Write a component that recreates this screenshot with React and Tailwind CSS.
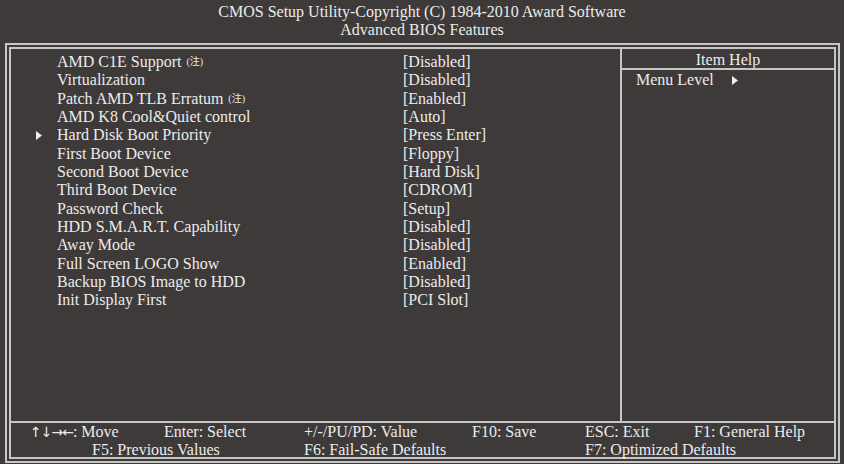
import React from 'react';

const ROWS = [
  { label: 'AMD C1E Support', note: true, value: '[Disabled]' },
  { label: 'Virtualization', value: '[Disabled]' },
  { label: 'Patch AMD TLB Erratum', note: true, value: '[Enabled]' },
  { label: 'AMD K8 Cool&Quiet control', value: '[Auto]' },
  { label: 'Hard Disk Boot Priority', sub: true, value: '[Press Enter]' },
  { label: 'First Boot Device', value: '[Floppy]' },
  { label: 'Second Boot Device', value: '[Hard Disk]' },
  { label: 'Third Boot Device', value: '[CDROM]' },
  { label: 'Password Check', value: '[Setup]' },
  { label: 'HDD S.M.A.R.T. Capability', value: '[Disabled]' },
  { label: 'Away Mode', value: '[Disabled]' },
  { label: 'Full Screen LOGO Show', value: '[Enabled]' },
  { label: 'Backup BIOS Image to HDD', value: '[Disabled]' },
  { label: 'Init Display First', value: '[PCI Slot]' },
];

function Arrow({ className }) {
  return (
    <svg width="6" height="9" viewBox="0 0 6 9" className={className}>
      <path d="M0 0 L6 4.5 L0 9 Z" fill="#ececec" />
    </svg>
  );
}

function Note() {
  return (
    <sup className="ml-[5px] text-[10px] leading-none font-['Liberation_Serif','Noto_Sans_CJK_SC',serif] relative -top-[2px]">
      (注)
    </sup>
  );
}

export default function App() {
  return (
    <div className="w-[844px] h-[464px] overflow-hidden bg-[#3d3a39] text-[#ececec] font-['Liberation_Serif','Noto_Sans_CJK_SC',serif] text-[16px]">
      {/* header */}
      <div className="h-[43px] pt-[3px] flex flex-col items-center leading-[18px]">
        <div>CMOS Setup Utility-Copyright (C) 1984-2010 Award Software</div>
        <div>Advanced BIOS Features</div>
      </div>

      {/* outer frame */}
      <div className="ml-[5px] mr-[4px] h-[420px] border-2 border-[#c6c6c6] p-[2px]">
        <div className="h-full border-2 border-[#c6c6c6] flex flex-col">
          <div className="flex flex-1 min-h-0">
            {/* settings list */}
            <div className="w-[609px] pt-[4px] leading-[18.35px]">
              {ROWS.map((r) => (
                <div key={r.label} className="flex items-center h-[18.35px]">
                  <div className="w-[46px] flex items-center pl-[25px]">
                    {r.sub && <Arrow />}
                  </div>
                  <div className="w-[346px] whitespace-nowrap">
                    {r.label}
                    {r.note && <Note />}
                  </div>
                  <div className="whitespace-nowrap">{r.value}</div>
                </div>
              ))}
            </div>

            <div className="w-[2px] bg-[#c6c6c6]" />

            {/* item help */}
            <div className="flex-1 flex flex-col">
              <div className="h-[19px] pt-[3px] leading-[16px] text-center">Item Help</div>
              <div className="h-[2px] bg-[#c6c6c6]" />
              <div className="flex items-center pl-[14px] pt-[2px] leading-[16px]">
                <span>Menu Level</span>
                <Arrow className="ml-[18px]" />
              </div>
            </div>
          </div>

          <div className="h-[2px] bg-[#c6c6c6]" />

          {/* key legend */}
          <div className="h-[34px] leading-[17px] whitespace-nowrap">
            <div className="flex pl-[19px]">
              <div className="w-[134px] flex items-baseline">
                <span className="font-['DejaVu_Sans',sans-serif] text-[14px] tracking-[-1px]">↑↓→←</span>
                <span>: Move</span>
              </div>
              <div className="w-[140px]">Enter: Select</div>
              <div className="w-[168px]">+/-/PU/PD: Value</div>
              <div className="w-[113px]">F10: Save</div>
              <div className="w-[109px]">ESC: Exit</div>
              <div>F1: General Help</div>
            </div>
            <div className="flex pl-[81px]">
              <div className="w-[212px]">F5: Previous Values</div>
              <div className="w-[281px]">F6: Fail-Safe Defaults</div>
              <div>F7: Optimized Defaults</div>
            </div>
          </div>
        </div>
      </div>
    </div>
  );
}
